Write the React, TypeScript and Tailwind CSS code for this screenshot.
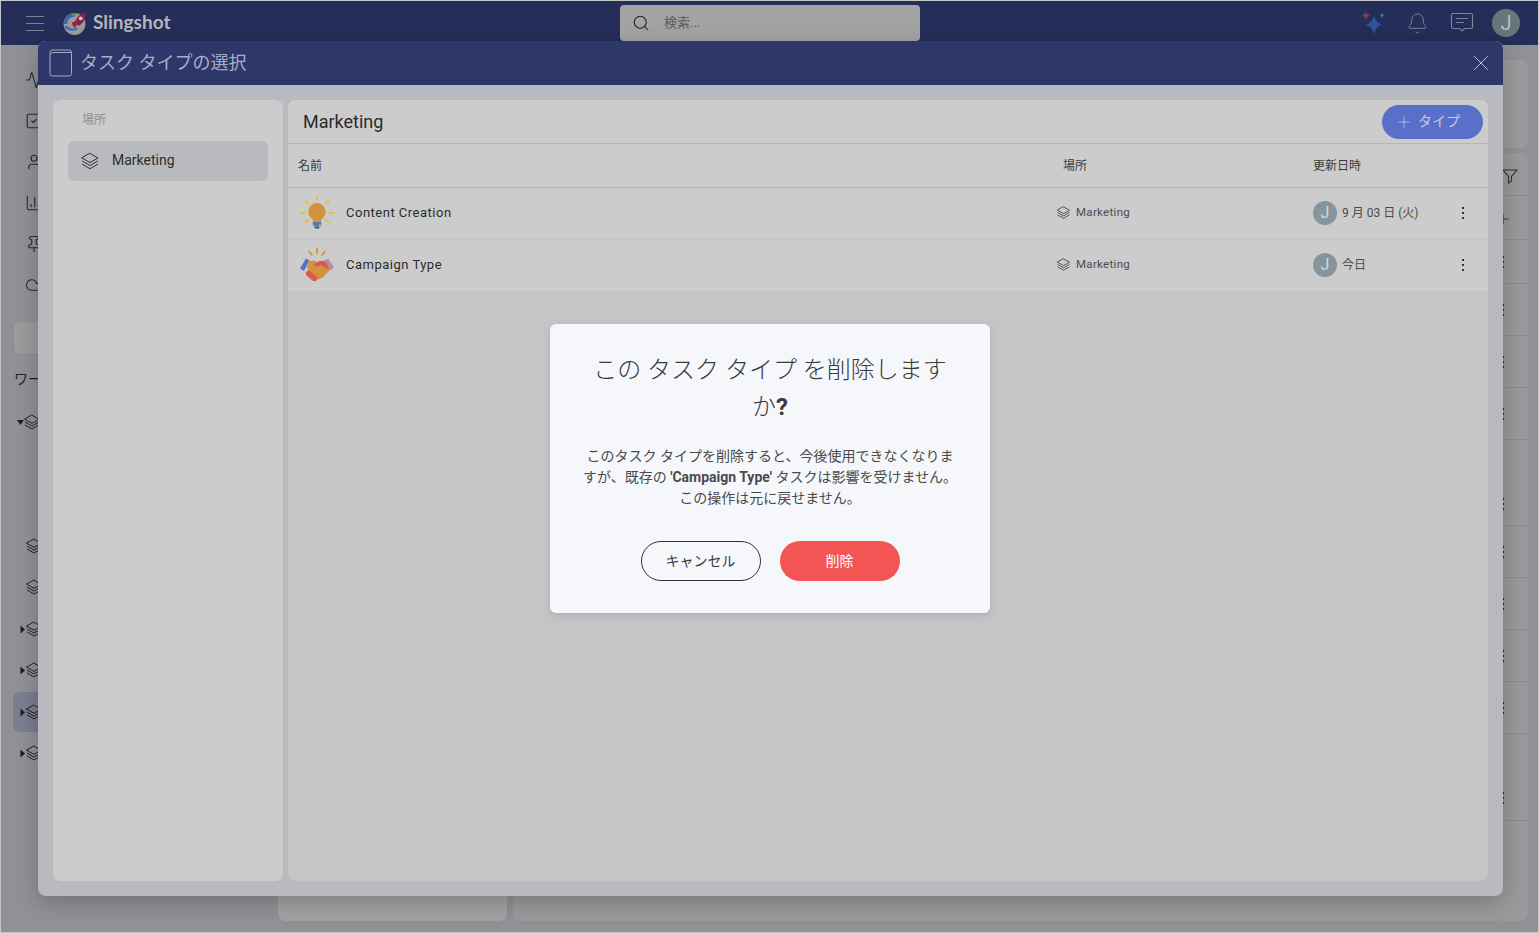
import React from "react";
import { Activity, SquareCheck, User, ChartColumn, Cloud, Pin, Plus, X, Search, Bell } from "lucide-react";

const font = { fontFamily: '"Roboto","Noto Sans CJK JP",sans-serif' };

function Layers({ className = "", size = 18, sw = 1.1 }: { className?: string; size?: number; sw?: number }) {
  return (
    <svg viewBox="0 0 20 20" width={size} height={size} fill="none" stroke="currentColor" strokeWidth={sw} strokeLinejoin="round" strokeLinecap="round" className={`shrink-0 ${className}`}>
      <path d="M10 2.500 18 7l-8 4.500L2 7z" />
      <path d="M2.500 10.200 10 14.500l7.500-4.300" />
      <path d="M2.500 13.400 10 17.700l7.500-4.300" />
    </svg>
  );
}

function Kebab({ className = "" }: { className?: string }) {
  return (
    <svg width="4" height="14" viewBox="0 0 4 14" className={className} fill="currentColor">
      <rect x="1" y="1" width="2" height="2" />
      <rect x="1" y="6" width="2" height="2" />
      <rect x="1" y="11" width="2" height="2" />
    </svg>
  );
}

function Caret({ down = false }: { down?: boolean }) {
  return (
    <svg width="7" height="9" viewBox="0 0 7 9" fill="#1f1f1f" className="shrink-0">
      {down ? <path d="M0 2h7L3.500 7z" /> : <path d="M1.500 0.500 6 4.500 1.500 8.500z" />}
    </svg>
  );
}

function Logo() {
  return (
    <svg width="25" height="25" viewBox="0 0 24 24" className="shrink-0">
      <circle cx="12" cy="12.500" r="10.500" fill="#9b9b9b" />
      <path d="M1.500 12.500A10.500 10.500 0 0 1 14 2.200L12 5.500A7 7 0 0 0 5 12.500z" fill="#3a66a8" />
      <path d="M2 15c3 4 9 5 13 2.500l-1-1.600c-3 1.600-7 1-9.500-2z" fill="#3f6fb6" />
      <path d="M9 2.500l4-.6 .5 2-3 1.600z" fill="#4f9a4a" />
      <path d="M22.500 1.500c.5 5-1.500 9.500-6 12.500l-3-.5 -1 3 -2.500-3 -.5-2.500 3-1 c2.500-5 5.500-7.500 10-8.500z" fill="#8f2244" />
      <circle cx="18" cy="7" r="1.800" fill="#cfcfcf" />
    </svg>
  );
}

function Sparkles() {
  return (
    <svg width="28" height="26" viewBox="0 0 28 26">
      <path d="M14 5c1.200 5.500 3.200 8 8.500 9.500C17.200 16 15.200 19 14 25c-1.200-6-3.200-9-8.500-10.500C10.800 13 12.800 10.500 14 5z" fill="#34509c" />
      <path d="M6 1c.5 2.800 1.600 3.900 4.500 4.500C7.600 6.100 6.500 7.200 6 10c-.5-2.800-1.600-3.900-4.500-4.500C4.400 4.900 5.500 3.800 6 1z" fill="#8f3a48" />
      <path d="M22 2.500c.3 1.800 1 2.500 2.800 2.800-1.800.4-2.500 1.100-2.800 2.900-.3-1.800-1-2.500-2.800-2.900C21 5 21.700 4.300 22 2.500z" fill="#4d7f9c" />
    </svg>
  );
}

function MessageIcon() {
  return (
    <svg width="24" height="22" viewBox="0 0 24 22" fill="none" stroke="#80849a" strokeWidth="1.100">
      <path d="M3 1.500h18a1.500 1.500 0 0 1 1.500 1.500v12a1.500 1.500 0 0 1-1.500 1.500h-6.500L12 19l-2.500-2.500H3A1.500 1.500 0 0 1 1.500 15V3A1.500 1.500 0 0 1 3 1.500z" />
      <path d="M6 6.500h12M6 10.500h8" />
    </svg>
  );
}

function BookIcon() {
  return (
    <svg width="24" height="28" viewBox="0 0 24 28" fill="none" stroke="#a4a9c4" strokeWidth="1">
      <rect x="1" y="1" width="21.500" height="26" rx="2.500" />
      <path d="M1.500 5.500C1.500 4.500 2.500 3.500 4 3.500h18.500" />
    </svg>
  );
}

function Bulb() {
  return (
    <svg width="36" height="36" viewBox="0 0 36 36" className="shrink-0">
      <g stroke="#e0c23a" strokeWidth="1.800" strokeLinecap="round">
        <path d="M18 1.500v4M6.500 6l3 2.800M29.500 6l-3 2.800M1.500 18h4.500M30 18h4.500M9.500 24.500l-3 2.800M26.500 24.500l3 2.800" />
      </g>
      <path d="M18 8a8.800 8.800 0 0 0-5.500 15.500c1.200 1 1.500 2 1.500 3.500h8c0-1.500.3-2.500 1.500-3.500A8.800 8.800 0 0 0 18 8z" fill="#d1933f" />
      <rect x="13.500" y="26" width="9" height="5.500" rx="1" fill="#7ba3c4" />
      <path d="M14 28h8M15 30h5" stroke="#33557a" strokeWidth="1" />
      <rect x="15.500" y="31.500" width="5" height="2" rx="1" fill="#33557a" />
    </svg>
  );
}

function Handshake() {
  return (
    <svg width="36" height="36" viewBox="0 0 36 36" className="shrink-0">
      <path d="M18 1.500v5M10 4.500l3 3.500M26 4.500l-3 3.500" stroke="#d1933f" strokeWidth="1.800" strokeLinecap="round" />
      <path d="M1 21.500 7 11.500l3.500 2L5 24z" fill="#5370d0" />
      <path d="M35 20.500 29 11.500l-3.500 2L31 23.500z" fill="#a98bd6" />
      <path d="M9 14.500l6-1 4 2 6-2 3 1 4 7-8 9-4 2-8-6-4-6z" fill="#d1933f" />
      <path d="M14 18l6-4 6 0 4 7-2 1-6-4-4 2z" fill="#d85a50" />
      <path d="M7 25l3-2 9 8-2 3-3 0-7-6z" fill="#d85a50" />
    </svg>
  );
}

function Avatar() {
  return (
    <div className="w-6 h-6 rounded-full bg-[#84959c] text-[#d3d7d9] text-[16px] flex items-center justify-center shrink-0">J</div>
  );
}

function BackRow({ h, kebab, line = true, children }: { h: string; kebab?: boolean; line?: boolean; children?: React.ReactNode }) {
  return (
    <div className={`${h} flex items-center justify-end pr-[23px] ${line ? "border-b border-[#8c8c8c]" : ""}`}>
      {kebab ? <Kebab className="text-[#2a2a2a]" /> : children}
    </div>
  );
}

function TableRow({ icon, name, date }: { icon: React.ReactNode; name: string; date: string }) {
  return (
    <div className="h-[51px] pb-[2px] bg-[#cccccc] grid grid-cols-[769px_256px_1fr] items-center">
      <div className="flex items-center gap-[11px] pl-[11px] text-[13px] tracking-[0.5px] text-[#2b2b2b]">
        {icon}
        <span>{name}</span>
      </div>
      <div className="flex items-center gap-[5px] -ml-[1px] text-[11.5px] tracking-[0.3px] text-[#4b4b4b]">
        <Layers size={15} sw={1.2} />
        <span>Marketing</span>
      </div>
      <div className="flex items-center pr-[23px]">
        <Avatar />
        <span className="ml-[5px] text-[12px] text-[#4b4b4b] whitespace-pre">{date}</span>
        <Kebab className="ml-auto text-[#333333]" />
      </div>
    </div>
  );
}

export default function App() {
  return (
    <div className="relative w-[1539px] h-[933px] overflow-hidden bg-[#909196] border border-[#c6c6c6] flex flex-col" style={font}>
      <header className="h-[44px] shrink-0 bg-[#252d59] flex items-center">
        <div className="w-[619px] flex items-center pl-[25px] shrink-0">
          <div className="w-[18px] flex flex-col gap-[6px] mr-[18px]">
            <div className="h-px bg-[#7d8198]" />
            <div className="h-px bg-[#7d8198]" />
            <div className="h-px bg-[#7d8198]" />
          </div>
          <Logo />
          <span className="ml-[6px] -mt-[2px] font-bold text-[19px] text-[#b4b5bb]" style={{ fontFamily: '"Lato",sans-serif' }}>Slingshot</span>
        </div>
        <div className="w-[300px] h-9 rounded-[4px] bg-[#a3a3a3] flex items-center pl-[12px] gap-[14px] shrink-0">
          <Search size={18} strokeWidth={1.4} className="text-[#222222]" />
          <span className="text-[13px] text-[#5c5c5c]">検索...</span>
        </div>
        <div className="flex-1 flex items-center justify-end pr-[18px]">
          <Sparkles />
          <Bell size={23} strokeWidth={1} className="ml-[18px] text-[#80849a]" />
          <div className="ml-[21px]"><MessageIcon /></div>
          <div className="ml-[18px] w-7 h-7 rounded-full bg-[#66767a] text-[#b9bdbd] text-[20px] flex items-center justify-center">J</div>
        </div>
      </header>

      <div className="flex-1 flex min-h-0">
        <aside className="w-[277px] shrink-0 pl-[12px] relative">
          <div className="flex flex-col items-start gap-[23px] pl-[12px] pt-[26px] text-[#2a2a2a]">
            <Activity size={18} strokeWidth={1.5} />
            <SquareCheck size={18} strokeWidth={1.5} />
            <User size={18} strokeWidth={1.5} />
            <ChartColumn size={18} strokeWidth={1.5} />
            <Pin size={18} strokeWidth={1.5} />
            <Cloud size={18} strokeWidth={1.5} />
          </div>
          <div className="mt-[27px] w-[200px] h-[34px] rounded-[6px] bg-[#9b9b9b] border border-[#8c8c8c]" />
          <div className="mt-[14px] pl-[1px] text-[14px] text-[#1f1f1f]">ワークスペース</div>
          <div className="mt-[23px] flex items-center pl-[4px] text-[#1f1f1f]"><Caret down /><Layers className="-ml-[1px]" /></div>
          <div className="mt-[106px] pl-[12px] text-[#1f1f1f]"><Layers /></div>
          <div className="mt-[23px] pl-[12px] text-[#1f1f1f]"><Layers /></div>
          <div className="mt-[24px] flex items-center pl-[6px] text-[#1f1f1f]"><Caret /><Layers className="-ml-[1px]" /></div>
          <div className="mt-[23px] flex items-center pl-[6px] text-[#1f1f1f]"><Caret /><Layers className="-ml-[1px]" /></div>
          <div className="mt-[13px] h-[40px] w-[200px] rounded-[6px] bg-[#7c7d8d] flex items-center pl-[6px] text-[#1f1f1f]"><Caret /><Layers className="-ml-[1px]" /></div>
          <div className="mt-[12px] flex items-center pl-[6px] text-[#1f1f1f]"><Caret /><Layers className="-ml-[1px]" /></div>
        </aside>

        <main className="flex-1 min-w-0 flex flex-col pt-[15px] pr-[10px] pb-[11px] gap-[5px]">
          <div className="h-[88px] shrink-0 rounded-[8px] bg-[#9b9b9b]" />
          <div className="flex-1 flex gap-[6px] min-h-0">
            <div className="w-[229px] shrink-0 rounded-[8px] bg-[#a2a2a2]" />
            <div className="flex-1 rounded-[8px] bg-[#999999] overflow-hidden text-[#333333]">
              <BackRow h="h-[43px]">
                <svg width="16" height="16" viewBox="0 0 16 16" fill="none" stroke="#333" strokeWidth="1.100" className="-mr-[13px] mt-[3px]">
                  <path d="M1 2h14L9.500 8.500V13l-3 2V8.500z" />
                </svg>
              </BackRow>
              <BackRow h="h-[44px]"><Plus size={18} strokeWidth={1.2} className="-mr-[7px] mt-[2px]" /></BackRow>
              <BackRow h="h-[44px]" kebab />
              <BackRow h="h-[52px]" kebab />
              <BackRow h="h-[52px]" kebab />
              <BackRow h="h-[52px]" kebab />
              <BackRow h="h-[43px]" line={false} />
              <BackRow h="h-[43px]" kebab />
              <BackRow h="h-[52px]" kebab />
              <BackRow h="h-[52px]" kebab />
              <BackRow h="h-[52px]" kebab />
              <BackRow h="h-[52px]" kebab />
              <BackRow h="h-[42px]" line={false} />
              <BackRow h="h-[45px]" kebab />
            </div>
          </div>
        </main>
      </div>

      {/* task type dialog */}
      <div className="absolute left-[37px] top-[40px] w-[1465px] h-[855px] rounded-[8px] overflow-hidden bg-[#b9bac0] shadow-[0_6px_22px_rgba(0,0,0,0.22)] flex flex-col">
        <div className="h-[44px] shrink-0 bg-[#2e3769] flex items-center pl-[11px] pr-[9px]">
          <BookIcon />
          <span className="ml-[7px] -mt-[2px] text-[18px] text-[#a9adc6]">タスク タイプの選択</span>
          <X size={26} strokeWidth={0.9} className="ml-auto text-[#c5c8d6]" />
        </div>
        <div className="flex-1 flex gap-[5px] p-[15px] min-h-0">
          <div className="w-[230px] shrink-0 rounded-[8px] bg-[#cccccc] px-[15px] pt-[12px]">
            <div className="pl-[14px] text-[12px] leading-[16px] text-[#8f8f8f]">場所</div>
            <div className="mt-[13px] h-[40px] pb-[1px] rounded-[6px] bg-[#b9bac0] flex items-center pl-[12px] gap-[12px] text-[14px] text-[#2e2e2e]">
              <Layers size={20} sw={1} />
              <span>Marketing</span>
            </div>
          </div>
          <div className="flex-1 rounded-[8px] overflow-hidden bg-[#c4c5c7] flex flex-col">
            <div className="h-[44px] shrink-0 bg-[#cccccc] border-b border-[#b6b7b9] flex items-center pl-[15px] pr-[5px] justify-between">
              <span className="text-[18px] text-[#2b2b2b]">Marketing</span>
              <div className="w-[101px] h-[34px] rounded-full bg-[#5a6fc9] flex items-center pl-[13px] gap-[5px] text-[14px] text-[#c3c8e6]">
                <Plus size={18} strokeWidth={1} />
                <span>タイプ</span>
              </div>
            </div>
            <div className="h-[44px] shrink-0 bg-[#cccccc] border-b border-[#b6b7b9] grid grid-cols-[769px_256px_1fr] items-center text-[12px] text-[#3a3a3a]">
              <span className="pl-[10px]">名前</span>
              <span className="pl-[6px]">場所</span>
              <span>更新日時</span>
            </div>
            <TableRow icon={<Bulb />} name="Content Creation" date="9 月 03 日 (火)" />
            <div className="h-px bg-[#c4c5c7]" />
            <TableRow icon={<Handshake />} name="Campaign Type" date="今日" />
          </div>
        </div>
      </div>

      {/* confirmation */}
      <div className="absolute left-[549px] top-[323px] w-[440px] h-[289px] rounded-[6px] bg-[#f5f7fb] px-[30px] pt-[28px] flex flex-col items-center text-center shadow-[0_2px_8px_rgba(0,0,0,0.12)]">
        <h2 className="text-[24px] leading-[37px] font-light text-[#3a3a3a]">
          この タスク タイプ を削除しますか<b className="font-bold">?</b>
        </h2>
        <p className="mt-[20px] text-[14px] leading-[21px] text-[#4a4a4a]">
          このタスク タイプを削除すると、今後使用できなくなりますが、既存の <b className="font-bold">'Campaign Type'</b> タスクは影響を受けません。この操作は元に戻せません。
        </p>
        <div className="mt-[32px] flex gap-[19px]">
          <div className="w-[120px] h-[40px] rounded-full border border-[#333333] flex items-center justify-center text-[14px] text-[#3a3a3a]">キャンセル</div>
          <div className="w-[120px] h-[40px] rounded-full bg-[#f25554] flex items-center justify-center text-[14px] text-white">削除</div>
        </div>
      </div>
    </div>
  );
}
